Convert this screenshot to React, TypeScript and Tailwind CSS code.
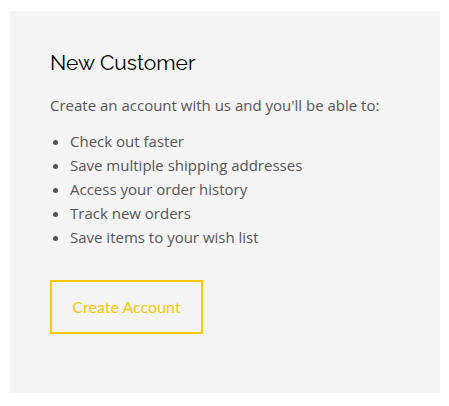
export default function App() {
  const perks = [
    "Check out faster",
    "Save multiple shipping addresses",
    "Access your order history",
    "Track new orders",
    "Save items to your wish list",
  ];

  return (
    <div className="w-[449px] h-[406px] bg-white pt-[11px] pl-[10px]">
      <div className="w-[430px] h-[382px] bg-[#f4f4f4] px-10 pt-[40px]">
        <h2
          className="text-[21px] leading-[24px] text-black"
          style={{ fontFamily: "Raleway, 'Noto Sans', sans-serif" }}
        >
          New Customer
        </h2>
        <div
          className="text-[#555] text-[15px] leading-6"
          style={{ fontFamily: "'Open Sans', sans-serif" }}
        >
          <p className="mt-[18px]">Create an account with us and you'll be able to:</p>
          <ul className="mt-[12px] list-disc pl-5">
            {perks.map((p) => (
              <li key={p}>{p}</li>
            ))}
          </ul>
        </div>
        <button
          className="mt-[31px] w-[153px] h-[54px] border-2 border-[#fcc800] text-[#fcc800] text-[16px]"
          style={{ fontFamily: "Lato, sans-serif" }}
        >
          Create Account
        </button>
      </div>
    </div>
  );
}
